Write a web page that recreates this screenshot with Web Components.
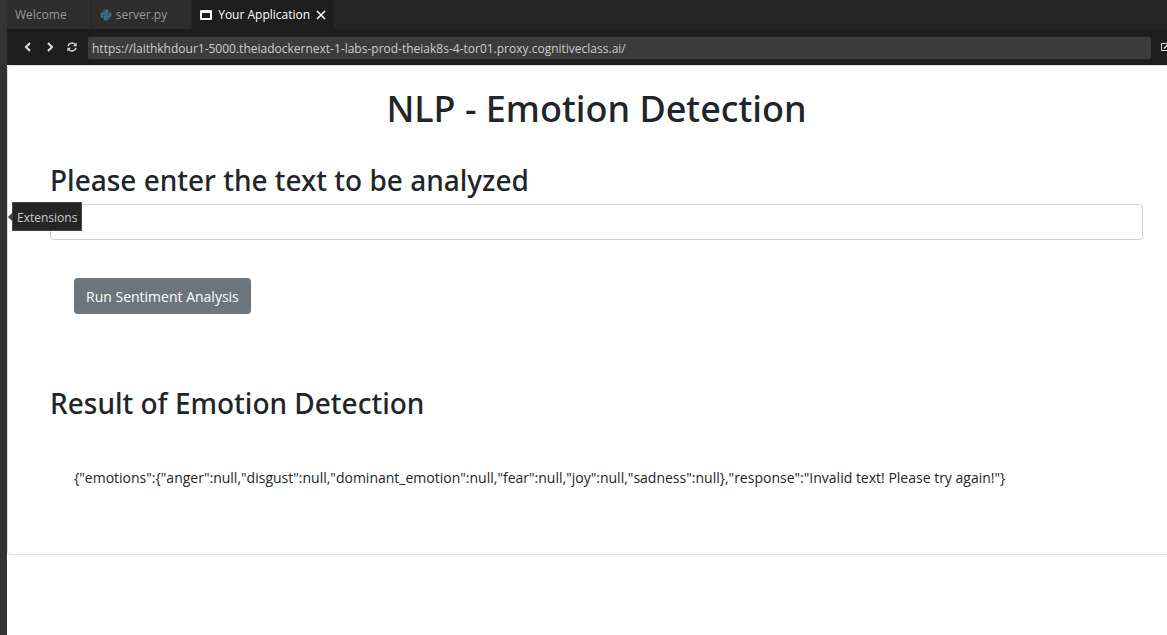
<!DOCTYPE html>
<html lang="en">
<head>
<meta charset="utf-8">
<meta name="viewport" content="width=device-width, initial-scale=1">
<title>Your Application</title>
<style>
html, body { height: 100%; }
body { margin: 0; background: #fff; font-family: "Open Sans", "Noto Sans", sans-serif; overflow: hidden; }
</style>
</head>
<body>
<ide-shell>
  <editor-tab slot="tabs">Welcome</editor-tab>
  <editor-tab slot="tabs" icon="python">server.py</editor-tab>
  <editor-tab slot="tabs" icon="window" active>Your Application</editor-tab>
  <browser-bar slot="toolbar" url="https://laithkhdour1-5000.theiadockernext-1-labs-prod-theiak8s-4-tor01.proxy.cognitiveclass.ai/"></browser-bar>
  <emotion-page></emotion-page>
  <hover-tip slot="tip">Extensions</hover-tip>
</ide-shell>

<script>
function define(name, html, setup) {
  const template = document.createElement('template');
  template.innerHTML = html;
  customElements.define(name, class extends HTMLElement {
    constructor() {
      super();
      this.attachShadow({ mode: 'open' }).append(template.content.cloneNode(true));
    }
    connectedCallback() { if (setup) setup(this, this.shadowRoot); }
  });
}

const icons = {
  python: '<svg width="12" height="12" viewBox="0 0 24 24" fill="#3f6f86"><path d="M11.8 1C6.300 1 6.600 3.400 6.600 3.400v3h5.400v.8H4.400S1 6.800 1 12.100s3 5.200 3 5.200h2v-2.600s-.1-3 3-3h5.200s2.900 0 2.900-2.800V4.200S17.600 1 11.800 1zM8.900 2.700a1 1 0 1 1 0 2 1 1 0 0 1 0-2z"/><path d="M12.200 23c5.500 0 5.200-2.400 5.200-2.400v-3H12v-.8h7.600s3.400.4 3.400-4.900-3-5.200-3-5.200h-2v2.600s.1 3-3 3H9.800s-2.900 0-2.900 2.800v4.700S6.400 23 12.200 23zm2.900-1.700a1 1 0 1 1 0-2 1 1 0 0 1 0 2z"/></svg>',
  window: '<svg width="12" height="12" viewBox="0 0 12 12"><path fill="#fff" fill-rule="evenodd" d="M1 1h10q1 0 1 1v8q0 1-1 1H1q-1 0-1-1V2q0-1 1-1zm1 3v5h8V4z"/></svg>'
};

define('ide-shell', `
<style>
:host { display: grid; grid-template-columns: 7px 1fr; height: 100%; position: relative; }
.rail { background: #333; }
.main { display: flex; flex-direction: column; min-width: 0; }
.tabs { display: flex; height: 29px; background: #252526; }
.view { flex: 1; background: #fff; }
</style>
<aside class="rail"></aside>
<div class="main">
  <nav class="tabs"><slot name="tabs"></slot></nav>
  <slot name="toolbar"></slot>
  <main class="view"><slot></slot></main>
</div>
<slot name="tip"></slot>`);

define('editor-tab', `
<style>
:host { display: flex; align-items: center; box-sizing: border-box; height: 29px; padding: 0 24px 0 8px; gap: 4px;
  background: #2d2d2d; color: #989898; border-right: 1px solid #252526; font-size: 12px; line-height: 16px; white-space: nowrap; }
:host([active]) { background: #1e1e1e; color: #fff; padding-right: 8px; gap: 6px; }
svg { display: block; }
button { display: none; border: 0; padding: 0; background: none; width: 10px; height: 10px; }
:host([active]) button { display: block; }
</style>
<span class="icon" hidden></span>
<span><slot></slot></span>
<button aria-label="Close"><svg width="10" height="10" viewBox="0 0 10 10" fill="none" stroke="#fff" stroke-width="1.500"><path d="M1 1l8 8M9 1L1 9"/></svg></button>`,
(host, root) => {
  const name = host.getAttribute('icon');
  if (!name) return;
  const holder = root.querySelector('.icon');
  holder.innerHTML = icons[name];
  holder.hidden = false;
});

define('browser-bar', `
<style>
:host { display: flex; align-items: center; height: 36px; background: #1e1e1e; }
button { border: 0; padding: 0; background: none; width: 22px; height: 24px; display: grid; place-items: center; }
.nav { display: flex; padding: 0 5px 0 10px; }
input { flex: 1; min-width: 0; box-sizing: border-box; height: 22px; margin-top: 2px; border: 0; border-radius: 2px; padding: 0 4px;
  background: #3c3c3c; color: #ccc; font: 12px "Open Sans", "Noto Sans", sans-serif; }
.open { width: 6px; margin-left: 10px; overflow: hidden; place-items: center start; }
</style>
<div class="nav">
<button aria-label="Back"><svg width="10" height="10" viewBox="0 0 10 10" fill="none" stroke="#e0e0e0" stroke-width="2"><path d="M7 1L3 5l4 4"/></svg></button>
<button aria-label="Forward"><svg width="10" height="10" viewBox="0 0 10 10" fill="none" stroke="#e0e0e0" stroke-width="2"><path d="M3 1l4 4-4 4"/></svg></button>
<button aria-label="Refresh"><svg width="10" height="10" viewBox="0 0 10 10" fill="none" stroke="#d4d4d4" stroke-width="1.500"><path d="M1 4.200C1.600 1 6 0 8.200 2.500M9 5.800C8.400 9 4 10 1.800 7.500"/><path fill="#d4d4d4" stroke="none" d="M9.700.5v3.700H6zM.3 9.500V5.800H4z"/></svg></button>
</div>
<input type="text" aria-label="Address">
<button class="open" aria-label="Open in new window"><svg width="12" height="10" viewBox="0 0 12 10" fill="none" stroke="#ddd"><path d="M6 1.500H.5v7h8V6"/><path stroke-width="1.500" d="M3 6.500L9 .5"/></svg></button>`,
(host, root) => { root.querySelector('input').value = host.getAttribute('url'); });

define('emotion-page', `
<style>
:host { display: block; color: #212529; }
.card { box-sizing: border-box; border: 1px solid #dfdfdf; border-right: 0; border-radius: 4px 0 0 4px; padding: 20px 24px 64px 42px; }
h1, h2 { margin: 0; font-family: "Noto Sans", "Open Sans", sans-serif; font-weight: 500; }
h1 { text-align: center; font-size: 36px; line-height: 46px; }
h2 { font-size: 28px; line-height: 36px; }
label { display: block; margin: 30px 0 6px; }
input { display: block; box-sizing: border-box; width: 100%; height: 36px; border: 1px solid #ced4da; border-radius: 4px; padding: 6px 12px;
  font: 14px "Open Sans", "Noto Sans", sans-serif; }
button { display: block; height: 36px; margin: 38px 24px 71px; border: 0; border-radius: 4px; padding: 0 12px; background: #6c757d; color: #fff;
  font: 14px "Open Sans", "Noto Sans", sans-serif; }
output { display: block; margin: 45px 24px 0; font-size: 14px; line-height: 24px; }
</style>
<section class="card">
  <h1>NLP - Emotion Detection</h1>
  <h2><label for="text">Please enter the text to be analyzed</label></h2>
  <input id="text" type="text">
  <button type="button">Run Sentiment Analysis</button>
  <h2>Result of Emotion Detection</h2>
  <output for="text">{"emotions":{"anger":null,"disgust":null,"dominant_emotion":null,"fear":null,"joy":null,"sadness":null},"response":"Invalid text! Please try again!"}</output>
</section>`);

define('hover-tip', `
<style>
:host { position: absolute; left: 12px; top: 202px; box-sizing: border-box; height: 29px; padding: 7px 4px 5px; border: 1px solid #454545;
  background: #252526; color: #ccc; font-size: 12px; line-height: 16px; }
:host::before { content: ""; position: absolute; left: -5px; top: 10px; border: 4px solid transparent; border-left: 0; border-right-color: #454545; }
</style>
<span role="tooltip"><slot></slot></span>`);
</script>
</body>
</html>
